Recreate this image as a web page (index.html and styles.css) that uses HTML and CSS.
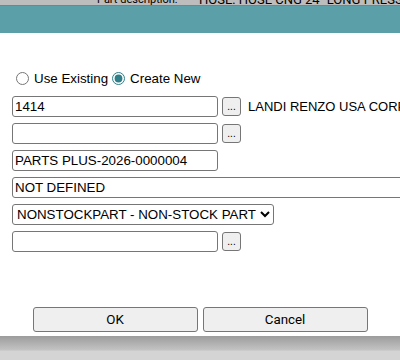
FILE: index.html
```html
<!DOCTYPE html>
<html lang="en">
<head>
  <meta charset="UTF-8">
  <title>Create Part</title>
  <link rel="stylesheet" href="styles.css">
</head>
<body>
  <div class="backdrop">
    <span class="back-label">Part description:</span>
    <span class="back-value">HOSE: HOSE CNG 24'' LONG PRESS FIT</span>
  </div>
  <div class="dialog">
    <div class="titlebar"></div>
    <div class="dialog-body">
      <div class="radios">
        <label><input type="radio" name="mode"> Use Existing</label>
        <label><input type="radio" name="mode" checked> Create New</label>
      </div>
      <div class="row">
        <input type="text" class="field" value="1414">
        <button class="pick">...</button>
        <span class="vendor">LANDI RENZO USA CORP</span>
      </div>
      <div class="row">
        <input type="text" class="field" value="">
        <button class="pick">...</button>
      </div>
      <div class="row">
        <input type="text" class="field" value="PARTS PLUS-2026-0000004">
      </div>
      <div class="row">
        <input type="text" class="field wide" value="NOT DEFINED">
      </div>
      <div class="row">
        <select class="type">
          <option>NONSTOCKPART - NON-STOCK PART</option>
        </select>
      </div>
      <div class="row">
        <input type="text" class="field" value="">
        <button class="pick">...</button>
      </div>
    </div>
    <div class="actions">
      <button class="action">OK</button>
      <button class="action">Cancel</button>
    </div>
  </div>
  <div class="footer"></div>
</body>
</html>
```
FILE: styles.css
```css
body {
  margin: 0;
  font-family: 'Liberation Sans', Arial, sans-serif;
  font-size: 13.33px;
  color: #000;
  background: #fff;
  height: 360px;
  overflow: hidden;
  display: flex;
  flex-direction: column;
}

.backdrop {
  height: 5px;
  background: #bdbdbd;
  overflow: hidden;
  position: relative;
  font-family: Roboto, sans-serif;
  line-height: 14px;
  white-space: nowrap;
}

.backdrop span {
  position: absolute;
  top: -7px;
}

.back-label {
  left: 97px;
  font-size: 11px;
}

.back-value {
  left: 199px;
  font-size: 13px;
}

.dialog {
  flex: 1;
  display: flex;
  flex-direction: column;
  overflow: hidden;
}

.titlebar {
  height: 28px;
  background: #5ba0a8;
  border-top: 1px solid #3e9aa4;
  box-sizing: border-box;
}

.dialog-body {
  padding: 36px 0 0 12px;
  display: flex;
  flex-direction: column;
  gap: 6px;
  flex: 1;
  overflow: hidden;
}

.radios {
  display: flex;
  height: 17px;
  align-items: center;
  margin-top: 1px;
  margin-bottom: 3px;
}

.radios label {
  display: flex;
  align-items: center;
}

.radios input {
  margin: 0 5px 0 4px;
  width: 13px;
  height: 13px;
  accent-color: #2f7f8a;
}

.row {
  display: flex;
  align-items: center;
  height: 21px;
  white-space: nowrap;
}

.field {
  flex-shrink: 0;
  width: 206px;
  height: 21px;
  box-sizing: border-box;
  border: 1px solid #767676;
  border-radius: 3px;
  padding: 0 2px;
  font: inherit;
  margin: 0;
}

.field.wide {
  width: 420px;
}

.pick {
  flex-shrink: 0;
  width: 19px;
  height: 19px;
  margin-left: 4px;
  padding: 0;
  border: 1px solid #767676;
  border-radius: 3px;
  background: #efefef;
  font: 10px 'Liberation Sans', Arial, sans-serif;
  line-height: 12px;
}

.vendor {
  margin-left: 7px;
  font-size: 13px;
}

.type {
  height: 21px;
  border: 1px solid #767676;
  border-radius: 3px;
  font: inherit;
  margin: 0;
  background: #fff;
}

.actions {
  display: flex;
  justify-content: center;
  gap: 5px;
  padding-bottom: 4px;
}

.action {
  width: 165px;
  height: 25px;
  border: 1px solid #767676;
  border-radius: 3px;
  background: #efefef;
  font: 13.33px Roboto, sans-serif;
}

.footer {
  height: 24px;
  background: linear-gradient(#9c9c9c, #c4c4c4 60%, #d4d4d4 61%, #d4d4d4);
}
```
